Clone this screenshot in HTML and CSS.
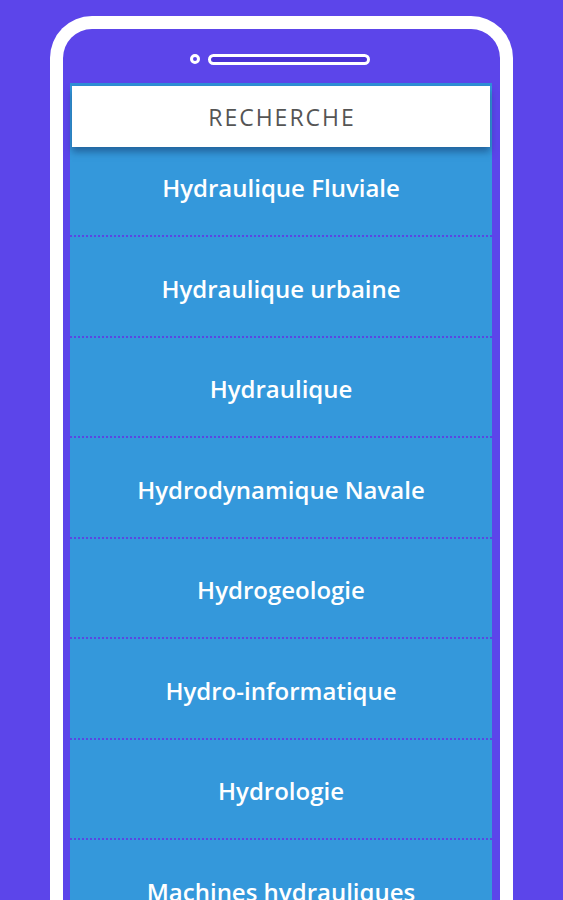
FILE: index.html
```html
<!DOCTYPE html>
<html>
<head>
<meta charset="utf-8">
<link rel="stylesheet" href="styles.css">
</head>
<body>
<div class="phone">
  <div class="speaker">
    <span class="cam"></span>
    <span class="grille"></span>
  </div>
  <div class="screen">
    <div class="header">RECHERCHE</div>
    <ul class="list">
      <li class="item first">Hydraulique Fluviale</li>
      <li class="item">Hydraulique urbaine</li>
      <li class="item">Hydraulique</li>
      <li class="item">Hydrodynamique Navale</li>
      <li class="item">Hydrogeologie</li>
      <li class="item">Hydro-informatique</li>
      <li class="item">Hydrologie</li>
      <li class="item">Machines hydrauliques</li>
    </ul>
  </div>
</div>
</body>
</html>
```

FILE: styles.css
```css
html, body {
  margin: 0;
  padding: 0;
  background: #5c45ea;
  height: 900px;
  overflow: hidden;
}
.phone {
  margin: 16px 0 0 50px;
  width: 463px;
  height: 1000px;
  border: 13px solid #ffffff;
  border-bottom: none;
  border-radius: 42px 42px 0 0;
  padding: 0 8px 0 7px;
  box-sizing: border-box;
}
.speaker {
  height: 54px;
  display: flex;
  align-items: center;
  justify-content: center;
  gap: 8px;
  padding-top: 6px;
  padding-right: 3px;
  box-sizing: border-box;
}
.cam {
  width: 10px;
  height: 10px;
  border: 3px solid #fff;
  border-radius: 50%;
  box-sizing: border-box;
  background: #5c45ea;
}
.grille {
  width: 162px;
  height: 11px;
  border: 3px solid #fff;
  border-radius: 6px;
  box-sizing: border-box;
  background: #4b32d6;
}
.screen {
  background: #3498db;
  height: 900px;
  border-top: 3px solid #2f8fd6;
  padding: 0 2px;
  position: relative;
}
.header {
  position: relative;
  z-index: 2;
  background: #ffffff;
  height: 61px;
  display: flex;
  align-items: center;
  justify-content: center;
  font-family: "Open Sans", "Liberation Sans", sans-serif;
  font-size: 23px;
  color: #555555;
  letter-spacing: 2px;
  padding-left: 2px;
  box-shadow: 0 5px 7px rgba(20, 60, 110, 0.55);
}
.list {
  list-style: none;
  margin: -10.5px -2px 0;
  padding: 0;
}
.item {
  height: 100.5px;
  box-sizing: border-box;
  border-bottom: 2px dotted #5a47e2;
  display: flex;
  align-items: center;
  justify-content: center;
  padding-top: 4px;
  font-family: "Open Sans", "Liberation Sans", sans-serif;
  font-weight: 600;
  font-size: 24px;
  color: #ffffff;
}
```
